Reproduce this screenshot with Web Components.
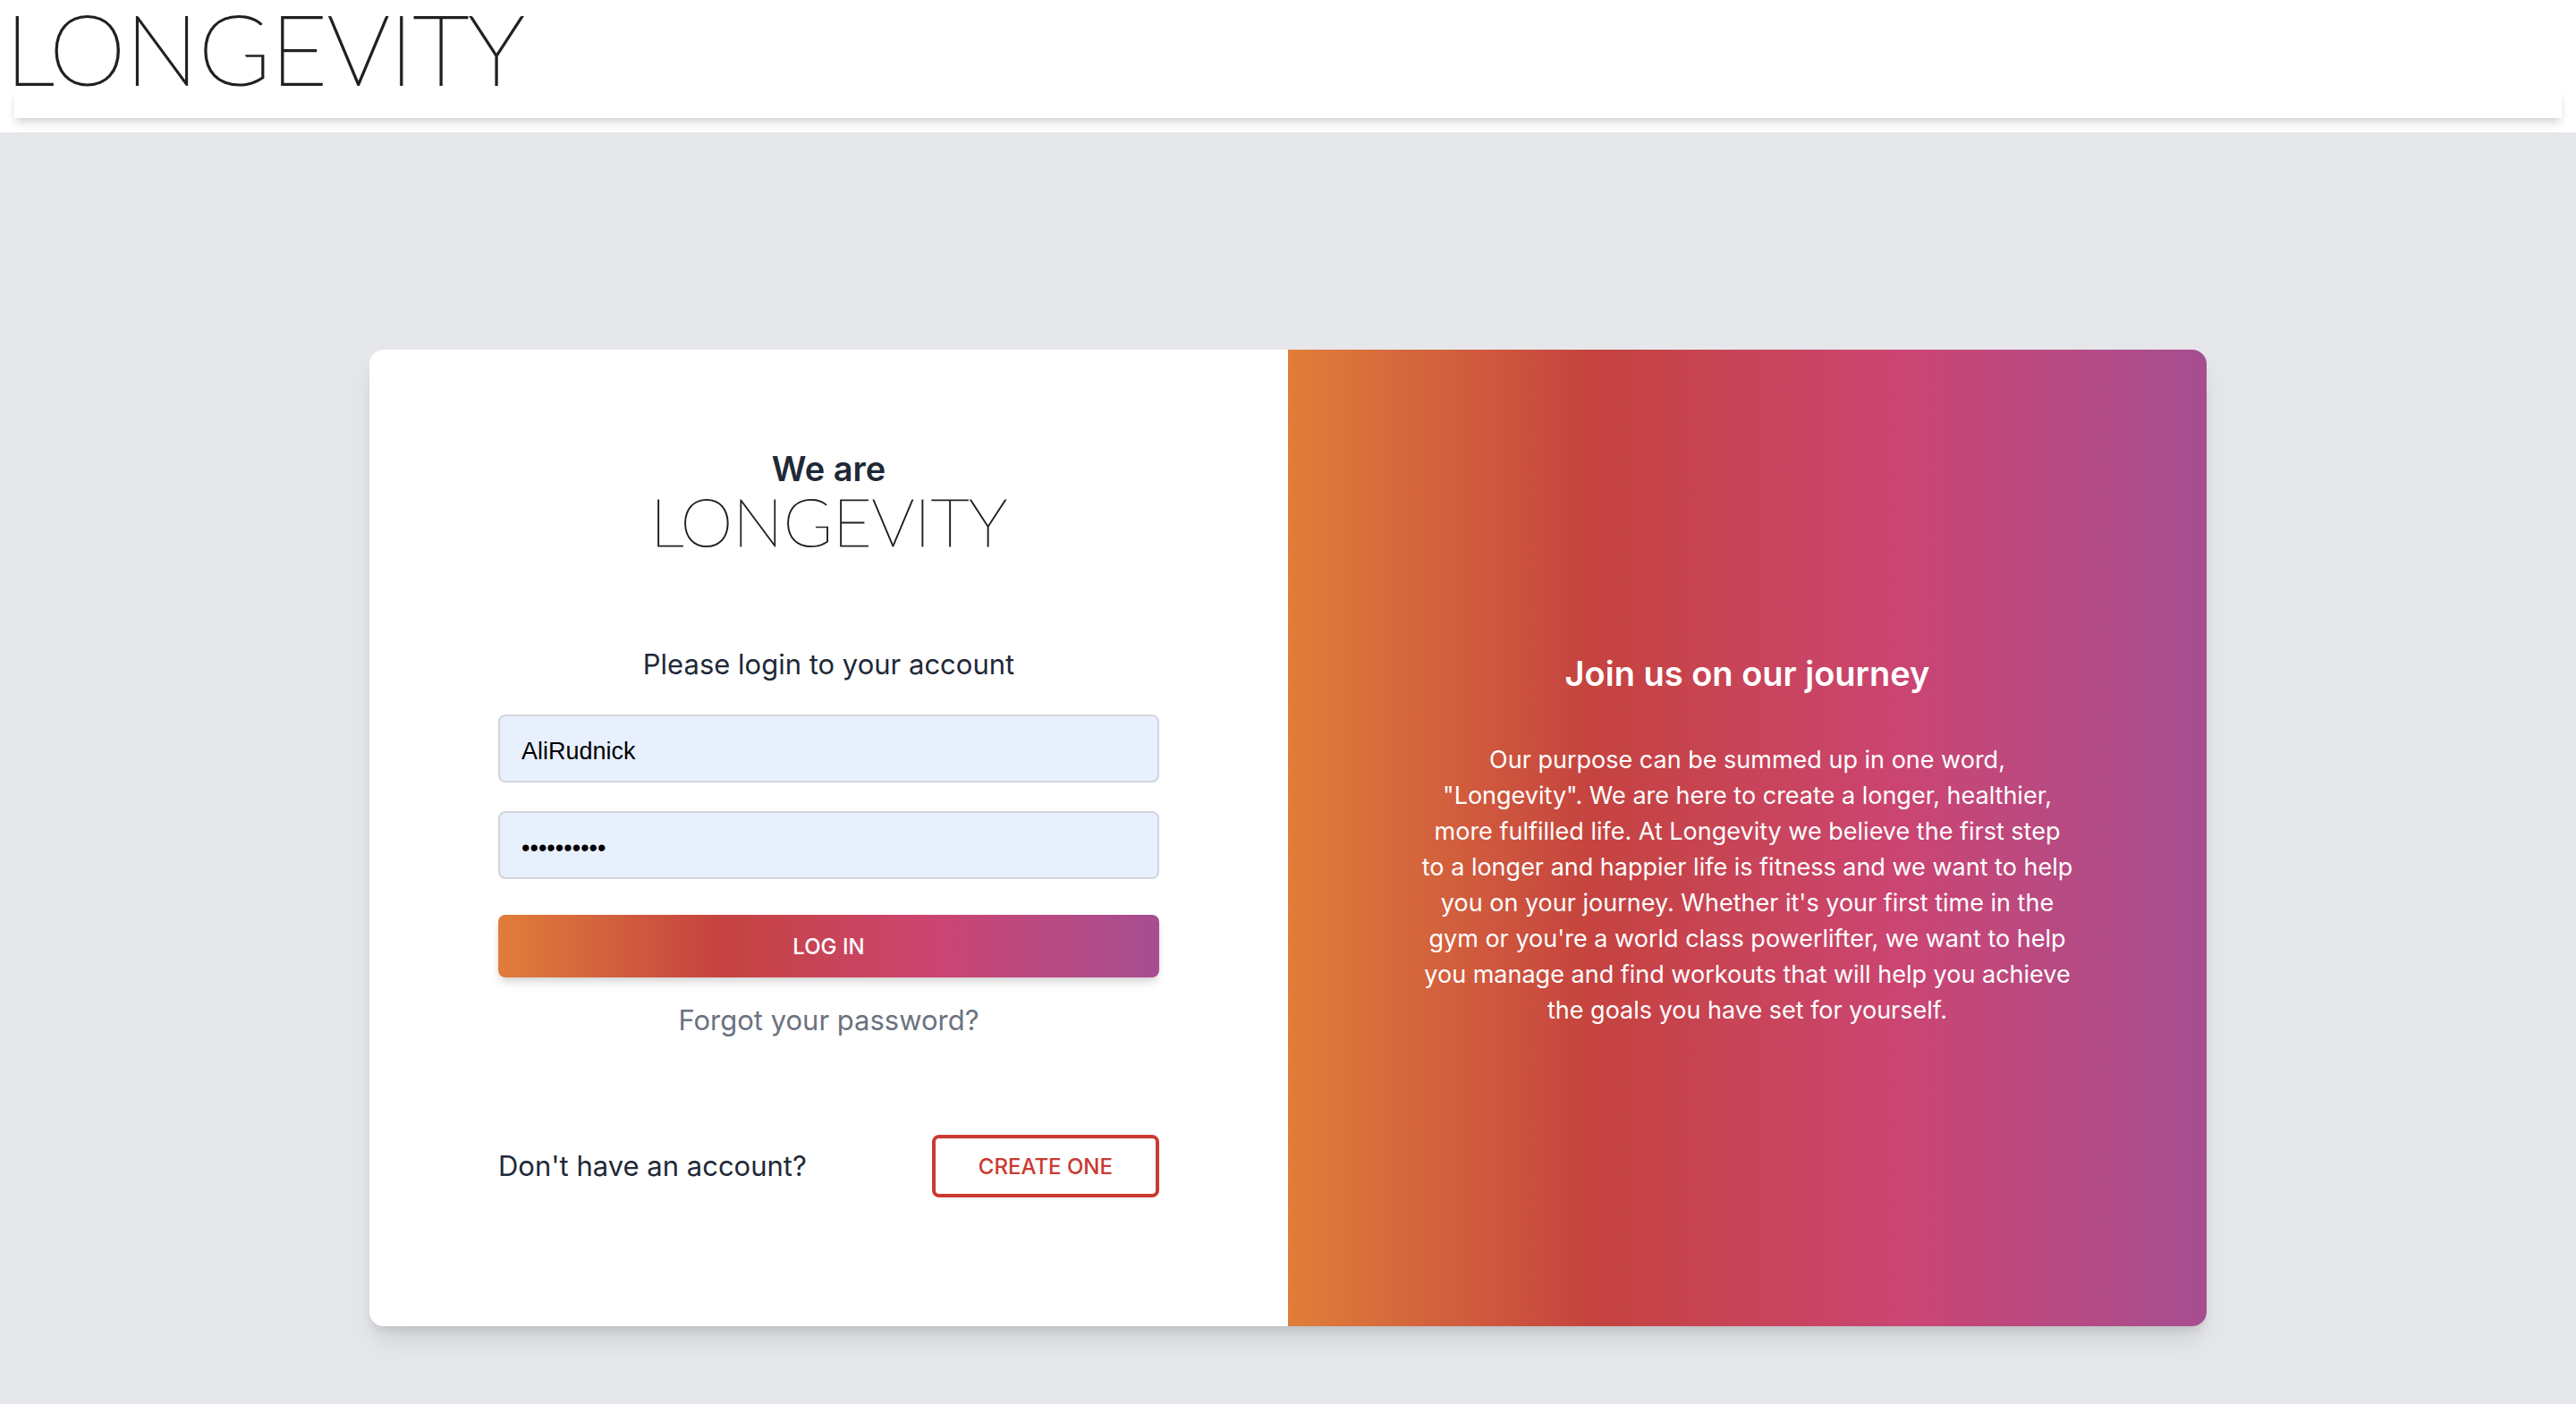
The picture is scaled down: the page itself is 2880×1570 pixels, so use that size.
<!DOCTYPE html>
<html lang="en">
<head>
<meta charset="utf-8">
<title>Longevity</title>
<style>
  html, body { margin: 0; min-height: 100%; }
  body {
    font-family: Inter, "Liberation Sans", sans-serif;
    color: #1f2937;
    background: #e5e7eb;
    --brand: linear-gradient(to right, #e07e3a, #c5433f 33.3%, #cb4572 66.6%, #a64e91);
  }
</style>
</head>
<body>
<longevity-app></longevity-app>
<script>
function define(name, html, setup) {
  const tpl = document.createElement('template');
  tpl.innerHTML = html;
  customElements.define(name, class extends HTMLElement {
    constructor() {
      super();
      this.attachShadow({ mode: 'open' }).append(tpl.content.cloneNode(true));
    }
    connectedCallback() { if (setup) setup(this, this.shadowRoot); }
  });
}

define('brand-logo', `
<style>
  :host { display: block; font: 100 109px/74px Lato, sans-serif; color: #231f20; white-space: nowrap; -webkit-text-stroke: 2px #231f20; }
  :host([size="small"]) { font-size: 75px; line-height: 58px; -webkit-text-stroke-width: 1px; }
</style>
LONGEVITY`);

define('site-header', `
<style>
  :host { display: block; background: #fff; padding: 16px; overflow: hidden; }
  brand-logo { padding-bottom: 10px; margin-left: -10px; }
  nav { height: 32px; background: #fff; box-shadow: 0 8px 12px -2px rgba(0,0,0,.1), 0 4px 8px -2px rgba(0,0,0,.1); }
</style>
<brand-logo></brand-logo>
<nav aria-label="Main"></nav>`);

define('text-field', `
<style>
  :host { display: block; }
  input { display: block; box-sizing: border-box; width: 100%; height: 76px; margin: 0; padding: 6px 24px 0;
    border: 2px solid #d1d5db; border-radius: 8px; background: #e8f0fe; color: #000;
    font: 27px "Liberation Sans", Arial, sans-serif; }
</style>
<input>`, (host, root) => {
  const input = root.querySelector('input');
  input.type = host.getAttribute('type') || 'text';
  input.value = host.getAttribute('value') || '';
  input.setAttribute('aria-label', host.getAttribute('label') || '');
});

define('action-button', `
<style>
  :host { display: block; }
  button { display: block; box-sizing: border-box; width: 100%; height: 70px; padding: 2px 48px 0; border: 0; border-radius: 8px;
    background: var(--brand); color: #fff; font: 500 24px/40px Inter, sans-serif; text-transform: uppercase; white-space: nowrap;
    box-shadow: 0 8px 12px -2px rgba(0,0,0,.1), 0 4px 8px -2px rgba(0,0,0,.1); }
  :host([outline]) button { background: #fff; border: 4px solid #ca3a31; color: #ca3a31; box-shadow: none; }
</style>
<button type="button"><slot></slot></button>`);

define('login-panel', `
<style>
  :host { display: block; box-sizing: border-box; background: #fff; padding: 104px 144px 144px; text-align: center; }
  form { display: flex; flex-direction: column; }
  h4 { margin: 0; font-size: 38px; line-height: 58px; font-weight: 600; }
  .brand { padding-bottom: 108px; }
  p { margin: 0; font-size: 31px; line-height: 48px; }
  .fields { display: grid; gap: 32px; margin: 32px 0 40px; }
  a { margin: 24px auto 104px; color: #6b7280; font-size: 31px; line-height: 48px; text-decoration: none; }
  .join { display: flex; justify-content: space-between; align-items: center; }
</style>
<form>
  <h4>We are</h4>
  <brand-logo size="small" class="brand"></brand-logo>
  <p>Please login to your account</p>
  <div class="fields">
    <text-field label="Username" value="AliRudnick"></text-field>
    <text-field label="Password" type="password" value="longevity1"></text-field>
  </div>
  <action-button>Log in</action-button>
  <a href="#forgot">Forgot your password?</a>
  <div class="join"><p>Don't have an account?</p><action-button outline>Create one</action-button></div>
</form>`);

define('about-panel', `
<style>
  :host { display: flex; flex-direction: column; justify-content: center; box-sizing: border-box; padding: 0 144px; background: var(--brand); color: #fff; text-align: center; }
  h4 { margin: 0 0 48px; font-size: 38px; line-height: 58px; font-weight: 600; }
  p { margin: 0; font-size: 27px; line-height: 40px; }
</style>
<h4>Join us on our journey</h4>
<p>Our purpose can be summed up in one word,<br>"Longevity". We are here to create a longer, healthier,<br>more fulfilled life. At Longevity we believe the first step<br>to a longer and happier life is fitness and we want to help<br>you on your journey. Whether it's your first time in the<br>gym or you're a world class powerlifter, we want to help<br>you manage and find workouts that will help you achieve<br>the goals you have set for yourself.</p>`);

define('longevity-app', `
<style>
  :host { display: block; }
  main { padding: 243px 413px 87px; }
  .card { display: grid; grid-template-columns: 1fr 1fr; border-radius: 16px; overflow: hidden;
    box-shadow: 0 20px 30px -6px rgba(0,0,0,.1), 0 8px 12px -4px rgba(0,0,0,.1); }
</style>
<site-header></site-header>
<main><div class="card"><login-panel></login-panel><about-panel></about-panel></div></main>`);
</script>
</body>
</html>
